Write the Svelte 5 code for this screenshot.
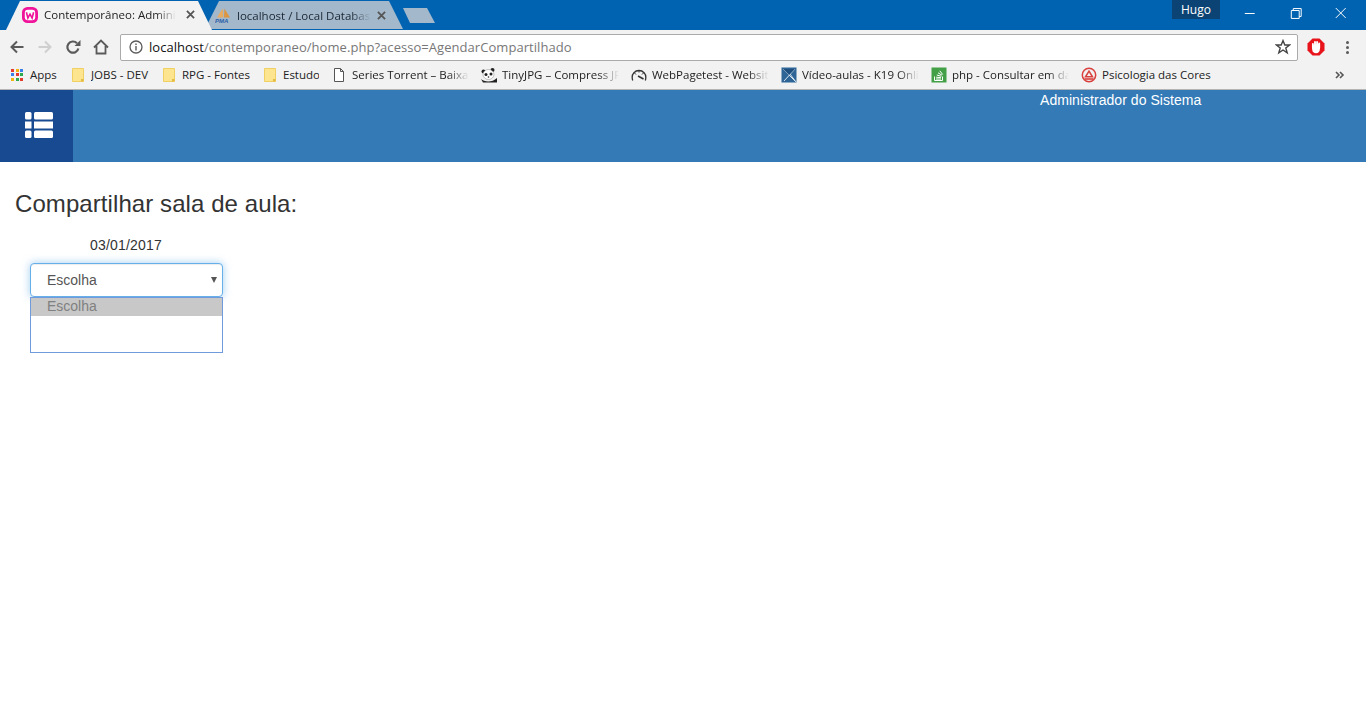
<script lang="ts">
	const bookmarks = [
		{ label: 'JOBS - DEV', icon: 'folder', width: 91, fade: false },
		{ label: 'RPG - Fontes', icon: 'folder', width: 101, fade: false },
		{ label: 'Estudo', icon: 'folder', width: 69, fade: false },
		{ label: 'Series Torrent – Baixar', icon: 'page', width: 150, fade: true },
		{ label: 'TinyJPG – Compress JPEG', icon: 'panda', width: 150, fade: true },
		{ label: 'WebPagetest - Website', icon: 'gauge', width: 150, fade: true },
		{ label: 'Vídeo-aulas - K19 Online', icon: 'k19', width: 150, fade: true },
		{ label: 'php - Consultar em dados', icon: 'php', width: 150, fade: true },
		{ label: 'Psicologia das Cores', icon: 'psi', width: 165, fade: false }
	];
</script>

<div class="chrome">
	<div class="tabstrip">
		<div class="tab active">
			<svg class="favicon" viewBox="0 0 16 16" aria-hidden="true">
				<rect x="0" y="0" width="16" height="16" rx="5.5" fill="#f0149b" />
				<rect x="2.8" y="2.8" width="10.4" height="10.4" rx="3" fill="#fff" />
				<path d="M4.4 5.2 5.9 11 8 7.2 10.1 11 11.6 5.2" fill="none" stroke="#f0149b" stroke-width="1.6" />
			</svg>
			<span class="tab-title">Contemporâneo: Administrador</span>
			<svg class="tab-close" viewBox="0 0 10 10" aria-hidden="true"><path d="M1 1 9 9M9 1 1 9" /></svg>
		</div>
		<div class="tab inactive">
			<svg class="favicon" viewBox="0 0 17 16" aria-hidden="true">
				<path d="M2 10.5 6 4 8 1.5 8.2 10.5Z" fill="#e8ab62" />
				<path d="M9 10.5 9.4 1.5 15 10.5Z" fill="#dd963f" />
				<text class="pma" x="0" y="15.5">PMA</text>
			</svg>
			<span class="tab-title">localhost / Local Database</span>
			<svg class="tab-close" viewBox="0 0 10 10" aria-hidden="true"><path d="M1 1 9 9M9 1 1 9" /></svg>
		</div>
		<div class="new-tab"></div>
		<div class="spacer"></div>
		<div class="profile">Hugo</div>
		<div class="window-controls">
			<svg viewBox="0 0 46 26" aria-hidden="true"><path d="M18 13.5H28" /></svg>
			<svg viewBox="0 0 46 26" aria-hidden="true"><path d="M18.5 10.5H26.5V18.5H18.5ZM20.5 10.5V8.5H28.5V16.5H26.5" /></svg>
			<svg viewBox="0 0 46 26" aria-hidden="true"><path d="M18 8 28 18M28 8 18 18" /></svg>
		</div>
	</div>

	<div class="toolbar">
		<svg class="nav" viewBox="0 0 16 16" aria-hidden="true"><path d="M14.5 8H2.5M8 2.5 2.5 8 8 13.5" fill="none" stroke="#5a5a5a" stroke-width="2" /></svg>
		<svg class="nav" viewBox="0 0 16 16" aria-hidden="true"><path d="M1.5 8H13.5M8 2.5 13.5 8 8 13.5" fill="none" stroke="#cfcfcf" stroke-width="2" /></svg>
		<svg class="nav" viewBox="0 0 16 16" aria-hidden="true"><path d="M13.4 9.5A5.6 5.6 0 1 1 12 4.2" fill="none" stroke="#5a5a5a" stroke-width="2.2" /><path d="M9.5 7H15.5V1Z" fill="#5a5a5a" /></svg>
		<svg class="nav" viewBox="0 0 16 16" aria-hidden="true"><path d="M1 8.5 8 1.5 15 8.5M3.5 7V14.5H12.5V7" fill="none" stroke="#5a5a5a" stroke-width="1.8" /></svg>
		<div class="omnibox">
			<svg class="info" viewBox="0 0 14 14" aria-hidden="true">
				<circle cx="7" cy="7" r="6" fill="none" stroke="#5a5a5a" stroke-width="1.3" />
				<path d="M7 6V10.5M7 3.5V5" stroke="#5a5a5a" stroke-width="1.4" />
			</svg>
			<span class="url"><b>localhost</b>/contemporaneo/home.php?acesso=AgendarCompartilhado</span>
			<svg class="star" viewBox="0 0 16 16" aria-hidden="true">
				<path d="M8 1.6 9.8 6H14.6L10.8 9 12.2 13.8 8 11 3.8 13.8 5.2 9 1.4 6H6.2Z" fill="none" stroke="#444" stroke-width="1.4" />
			</svg>
		</div>
		<svg class="opera" viewBox="0 0 18 18" aria-hidden="true">
			<path d="M5.5 0.5H12.5L17.5 5.5V12.5L12.5 17.5H5.5L0.5 12.5V5.5Z" fill="#e8141c" />
			<path d="M5.2 7.5V11.5C5.2 14 7 15.3 9 15.3 11.5 15.3 12.9 13.5 12.9 11V5.5" fill="#fff" />
			<path d="M5.9 6V10M8 4V10M10.1 4V10M12.2 5.5V10" stroke="#fff" stroke-width="1.9" stroke-linecap="round" />
		</svg>
		<div class="menu-dots"><i></i><i></i><i></i></div>
	</div>

	<div class="bookmarks">
		<div class="apps-item">
			<span class="apps-grid">
				{#each ['#e33b2e', '#f2b50f', '#3a80ea', '#3a80ea', '#e33b2e', '#2da94f', '#f2b50f', '#2da94f', '#e33b2e'] as c}
					<i style={`background: ${c}`}></i>
				{/each}
			</span>
			<span>Apps</span>
		</div>
		{#each bookmarks as b}
			<div class="bookmark" style={`width: ${b.width}px`}>
				{#if b.icon === 'folder'}
					<svg viewBox="0 0 14 16" aria-hidden="true"><path d="M1.5 1.5H12.5V14.5H1.5Z" fill="#fde58f" stroke="#f0cf63" /><rect x="10" y="12" width="2.5" height="2.5" fill="#e5bb45" /></svg>
				{:else if b.icon === 'page'}
					<svg viewBox="0 0 14 16" aria-hidden="true"><path d="M2.5 1.5H8.5L11.5 4.5V14.5H2.5ZM8.5 1.5V4.5H11.5" fill="#fff" stroke="#555" /></svg>
				{:else if b.icon === 'panda'}
					<svg viewBox="0 0 16 16" aria-hidden="true">
						<path d="M0 12C3 15 11 16 16 11V15.5H2Z" fill="#222" />
						<circle cx="2.5" cy="4.5" r="2" fill="#222" /><circle cx="11.5" cy="3" r="2" fill="#222" />
						<ellipse cx="7.5" cy="7.5" rx="5.5" ry="5" fill="#fff" stroke="#888" stroke-width="0.5" />
						<circle cx="5" cy="7.5" r="1.5" fill="#222" /><circle cx="10" cy="7" r="1.5" fill="#222" />
						<circle cx="7.5" cy="10" r="0.8" fill="#222" />
					</svg>
				{:else if b.icon === 'gauge'}
					<svg viewBox="0 0 16 16" aria-hidden="true"><path d="M1.7 13.5C-0.5 6 5 3.5 8 3.5S16.5 6 14.3 13.5" fill="none" stroke="#333" stroke-width="1.3" /><path d="M7 9 12.5 12" stroke="#333" stroke-width="1.6" /><path d="M8 3.5V5.5M3.5 6 5 7.5M12.5 6 11 7.5" stroke="#333" stroke-width="1" /></svg>
				{:else if b.icon === 'k19'}
					<svg viewBox="0 0 16 16" aria-hidden="true"><rect x="0.5" y="0.5" width="15" height="15" fill="#2f6596" /><path d="M2 2 14 14M14 2 3 14M9 7 15 15" stroke="#d5e4f0" stroke-width="1" fill="none" /><path d="M2 2H14L8 8Z" fill="#1f4f7e" /></svg>
				{:else if b.icon === 'php'}
					<svg viewBox="0 0 16 16" aria-hidden="true"><rect x="0.5" y="0.5" width="15" height="15" fill="#43a047" /><path d="M3.5 9.5V13.5H11.5V9.5" fill="none" stroke="#fff" stroke-width="1" /><path d="M5 12H10M5.2 10.2 10 10.7M5.8 8 10.3 9.3M7 5.8 11 8.2M8.8 3.8 11.7 7.5" stroke="#fff" stroke-width="1" /></svg>
				{:else}
					<svg viewBox="0 0 16 16" aria-hidden="true"><circle cx="8" cy="8" r="6.7" fill="none" stroke="#d9403d" stroke-width="1.5" /><path d="M8 4.2 11.5 9.8H4.5Z" fill="none" stroke="#d9403d" stroke-width="1.5" /><path d="M3.5 12H12.5" stroke="#d9403d" stroke-width="1.6" /></svg>
				{/if}
				<span class="label" class:fade={b.fade}>{b.label}</span>
			</div>
		{/each}
		<div class="spacer"></div>
		<svg class="more" viewBox="0 0 10 8" aria-hidden="true"><path d="M1 1 4 4 1 7M5 1 8 4 5 7" fill="none" stroke="#555" stroke-width="1.6" /></svg>
	</div>
</div>

<header class="app-header">
	<div class="menu-button">
		<svg viewBox="0 0 28 26" aria-hidden="true">
			<g fill="#fff">
				<rect x="0" y="0" width="6.5" height="7.5" rx="1.5" />
				<rect x="9" y="0" width="19" height="7.5" rx="1.5" />
				<rect x="0" y="9.5" width="6.5" height="7" />
				<rect x="9" y="9.5" width="19" height="7" />
				<rect x="0" y="18.5" width="6.5" height="7.5" rx="1.5" />
				<rect x="9" y="18.5" width="19" height="7.5" rx="1.5" />
			</g>
		</svg>
	</div>
	<div class="user-name">Administrador do Sistema</div>
</header>

<main>
	<h1>Compartilhar sala de aula:</h1>
	<div class="picker">
		<div class="date">03/01/2017</div>
		<div class="select">
			<span>Escolha</span>
			<i class="caret"></i>
		</div>
		<div class="dropdown">
			<div class="option">Escolha</div>
		</div>
	</div>
</main>

<style>
	:global(body) {
		background: #fff;
		font-family: "Liberation Sans", Arial, sans-serif;
		overflow: hidden;
	}
	.chrome {
		font-family: "Open Sans", "Noto Sans", sans-serif;
		font-size: 11.5px;
		color: #222;
	}
	.spacer {
		flex: 1;
	}
	.tabstrip {
		display: flex;
		align-items: flex-start;
		height: 30px;
		background: #0063b1;
		padding-left: 6px;
		box-sizing: border-box;
	}
	.tab {
		display: flex;
		align-items: center;
		box-sizing: border-box;
		height: 29px;
		margin-top: 1px;
		padding: 0 17px 2px 16px;
		width: 206px;
		clip-path: polygon(0 100%, 14px 0, calc(100% - 14px) 0, 100% 100%);
	}
	.tab.active {
		background: #f2f2f2;
		position: relative;
		z-index: 1;
		color: #222;
	}
	.tab.active .tab-close {
		margin-left: 10px;
	}
	.tab.inactive {
		background: #a3b8cb;
		width: 198px;
		height: 28px;
		margin-left: -7px;
		padding: 0 17px 0 10px;
		color: #1c2733;
	}
	.favicon {
		flex: none;
		width: 16px;
		height: 16px;
		margin-right: 6px;
	}
	.tab.inactive .favicon {
		width: 17px;
		margin-right: 5px;
	}
	.pma {
		font-family: "Liberation Sans", Arial, sans-serif;
		font-size: 6px;
		font-weight: 700;
		font-style: italic;
		fill: #2c5ea8;
	}
	.tab-title {
		flex: 1;
		overflow: hidden;
		white-space: nowrap;
		-webkit-mask-image: linear-gradient(90deg, #000 85%, transparent);
		mask-image: linear-gradient(90deg, #000 85%, transparent);
	}
	.tab-close {
		flex: none;
		width: 9px;
		height: 9px;
		margin-left: 6px;
		fill: none;
		stroke: #555;
		stroke-width: 2;
	}
	.new-tab {
		width: 32px;
		height: 15px;
		margin: 8px 0 0 0;
		background: #a3b8cb;
		clip-path: polygon(0 0, 75% 0, 100% 100%, 22% 100%);
	}
	.profile {
		width: 48px;
		height: 19px;
		line-height: 20px;
		text-align: center;
		background: #0b4474;
		color: #fff;
		font-size: 12px;
	}
	.window-controls {
		display: flex;
		margin: 0 2.5px 0 7px;
	}
	.window-controls svg {
		width: 45.5px;
		height: 26px;
		fill: none;
		stroke: #fff;
		stroke-width: 1;
	}
	.toolbar {
		display: flex;
		align-items: center;
		height: 30px;
		background: #f2f2f2;
		padding: 4px 0 0 9px;
		box-sizing: border-box;
	}
	.nav {
		width: 16px;
		height: 16px;
		margin-right: 12px;
		flex: none;
	}
	.omnibox {
		display: flex;
		align-items: center;
		box-sizing: border-box;
		width: 1178px;
		height: 27px;
		margin-left: -1px;
		padding: 0 6px 0 8px;
		background: #fff;
		border: 1px solid #aaa;
		border-radius: 2px;
	}
	.info {
		width: 14px;
		height: 14px;
		margin-right: 6px;
	}
	.url {
		flex: 1;
		font-size: 13px;
		color: #777;
		letter-spacing: 0.05px;
	}
	.url b {
		font-weight: 400;
		color: #111;
	}
	.star {
		width: 16px;
		height: 16px;
	}
	.opera {
		width: 18px;
		height: 18px;
		margin-left: 9px;
	}
	.menu-dots {
		display: grid;
		gap: 2px;
		margin-left: 21px;
	}
	.menu-dots i {
		display: block;
		width: 3px;
		height: 3px;
		border-radius: 50%;
		background: #5a5a5a;
	}
	.bookmarks {
		display: flex;
		align-items: center;
		box-sizing: border-box;
		height: 30px;
		padding-left: 11px;
		background: #f2f2f2;
		border-bottom: 1px solid #b4b4b4;
	}
	.apps-item {
		display: flex;
		align-items: center;
		gap: 7px;
		width: 59px;
		flex: none;
	}
	.apps-grid {
		display: grid;
		grid-template-columns: repeat(3, 3px);
		gap: 1.5px;
	}
	.apps-grid i {
		display: block;
		height: 3px;
	}
	.bookmark {
		display: flex;
		align-items: center;
		gap: 5px;
		flex: none;
		box-sizing: border-box;
		padding-right: 12px;
		overflow: hidden;
	}
	.bookmark svg {
		flex: none;
		width: 16px;
		height: 16px;
	}
	.label {
		white-space: nowrap;
		overflow: hidden;
		flex: 1;
	}
	.label.fade {
		-webkit-mask-image: linear-gradient(90deg, #000 82%, transparent);
		mask-image: linear-gradient(90deg, #000 82%, transparent);
	}
	.more {
		width: 10px;
		height: 8px;
		margin-right: 21px;
	}
	.app-header {
		display: flex;
		height: 72px;
		background: #337ab7;
		position: relative;
	}
	.menu-button {
		display: flex;
		align-items: center;
		justify-content: center;
		box-sizing: border-box;
		width: 73px;
		height: 72px;
		padding-left: 4px;
		background: #174a90;
	}
	.menu-button svg {
		width: 28px;
		height: 26px;
		margin-top: -2px;
	}
	.user-name {
		margin-left: 967px;
		padding-top: 2px;
		font-size: 14px;
		line-height: 16px;
		letter-spacing: 0.04px;
		color: #fff;
	}
	main {
		padding: 29px 0 0 15px;
	}
	h1 {
		margin: 0;
		font-size: 24px;
		line-height: 26px;
		font-weight: 400;
		letter-spacing: 0.08px;
		color: #333;
	}
	.picker {
		width: 193px;
		margin: 18px 0 0 15px;
		font-size: 14px;
		color: #333;
	}
	.date {
		text-align: center;
		line-height: 20px;
		margin-bottom: 8px;
		padding-right: 1px;
		letter-spacing: 0.2px;
	}
	.select {
		display: flex;
		align-items: center;
		justify-content: space-between;
		box-sizing: border-box;
		height: 34px;
		padding: 0 5px 0 16px;
		border: 1px solid #66afe9;
		border-radius: 4px;
		background: #fff;
		color: #555;
		box-shadow: inset 0 1px 1px rgba(0, 0, 0, 0.075), 0 0 8px rgba(102, 175, 233, 0.6);
	}
	.caret {
		width: 0;
		height: 0;
		margin-top: -1px;
		border-left: 3.5px solid transparent;
		border-right: 3.5px solid transparent;
		border-top: 6px solid #555;
	}
	.dropdown {
		box-sizing: border-box;
		height: 56px;
		position: relative;
		background: #fff;
		border: 1px solid #6f9bdc;
	}
	.option {
		height: 18px;
		line-height: 16px;
		padding-left: 16px;
		background: #c8c8c8;
		color: #808080;
	}
</style>
